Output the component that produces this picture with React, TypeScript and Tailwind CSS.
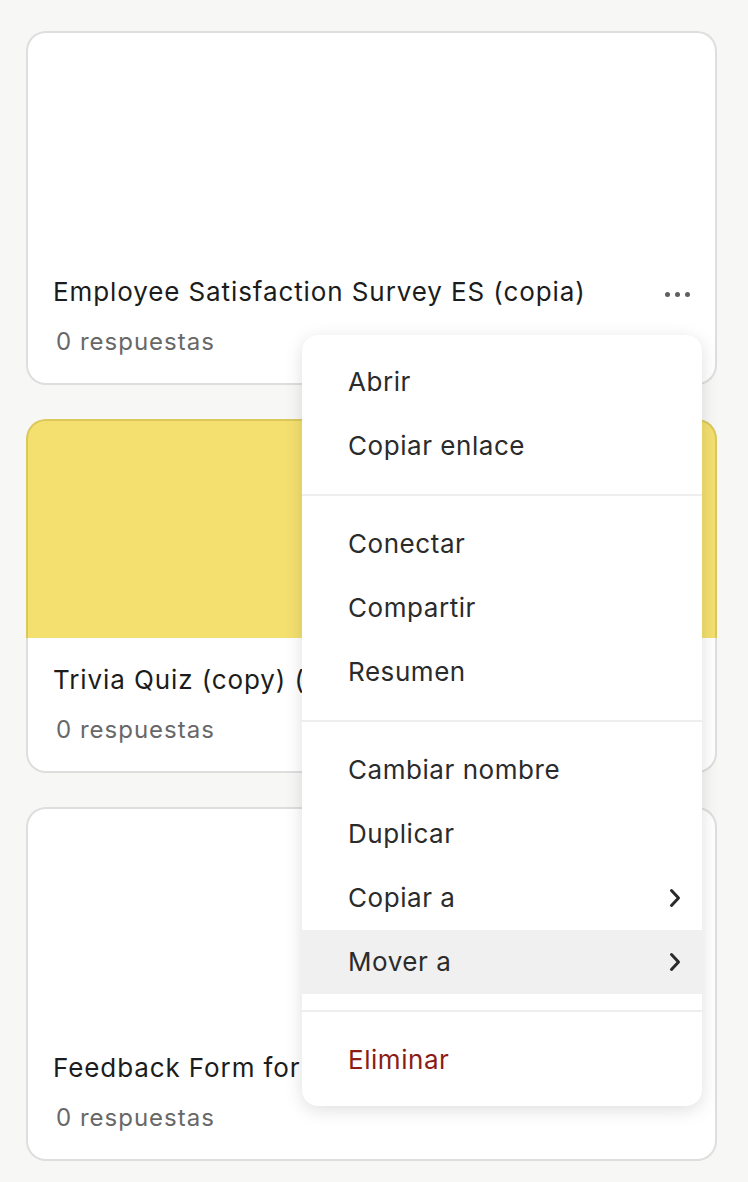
import React from 'react';

type Form = { title: string; responses: number; cover?: string; coverBorder?: string };

const forms: Form[] = [
  { title: 'Employee Satisfaction Survey ES (copia)', responses: 0 },
  { title: 'Trivia Quiz (copy) (copia)', responses: 0, cover: 'bg-[#f4e06f]', coverBorder: 'border-[#dbc85d]' },
  { title: 'Feedback Form for Events', responses: 0 },
];

type MenuItem = { label: string; submenu?: boolean; active?: boolean; danger?: boolean };

const menuGroups: MenuItem[][] = [
  [{ label: 'Abrir' }, { label: 'Copiar enlace' }],
  [{ label: 'Conectar' }, { label: 'Compartir' }, { label: 'Resumen' }],
  [
    { label: 'Cambiar nombre' },
    { label: 'Duplicar' },
    { label: 'Copiar a', submenu: true },
    { label: 'Mover a', submenu: true, active: true },
  ],
  [{ label: 'Eliminar', danger: true }],
];

const Chevron = () => (
  <svg width="14" height="22" viewBox="0 0 14 22" fill="none">
    <path d="M3.5 3.5 L10.5 11 L3.5 18.5" stroke="#2a2a2a" strokeWidth="3" strokeLinecap="round" strokeLinejoin="round" />
  </svg>
);

const Dots = () => (
  <div className="flex items-center gap-[5px] pt-[4px]">
    <span className="w-[5px] h-[5px] rounded-full bg-[#5f5f5f]" />
    <span className="w-[5px] h-[5px] rounded-full bg-[#5f5f5f]" />
    <span className="w-[5px] h-[5px] rounded-full bg-[#5f5f5f]" />
  </div>
);

const FormCard: React.FC<{ form: Form; showDots?: boolean }> = ({ form, showDots }) => (
  <div className="flex flex-col">
    <div
      className={`h-[219px] rounded-t-[20px] border-2 border-b-0 ${form.cover ?? 'bg-white'} ${
        form.coverBorder ?? 'border-[#dedede]'
      }`}
    />
    <div className="bg-white border-2 border-t-0 border-[#dedede] rounded-b-[20px] px-[25px] pt-[27px] pb-[26px]">
      <div className="flex items-center justify-between">
        <p className="text-[26px] leading-[30px] tracking-[0.9px] text-[#1c1c1c] whitespace-nowrap">{form.title}</p>
        {showDots && <Dots />}
      </div>
      <p className="mt-[20px] text-[24px] leading-[30px] tracking-[1px] text-[#686868] pl-[3px]">
        {form.responses} respuestas
      </p>
    </div>
  </div>
);

const ContextMenu = () => (
  <div className="absolute left-[302px] top-[335px] w-[400px] bg-white rounded-[16px] shadow-[0_4px_18px_rgba(0,0,0,0.13)] overflow-hidden">
    {menuGroups.map((group, gi) => (
      <div key={gi}>
        {gi > 0 && <div className="h-[2px] bg-[#eeeeee]" />}
        <div className={gi === 0 ? 'pt-[15px] pb-[16px]' : gi === menuGroups.length - 1 ? 'pt-[16px] pb-[14px]' : 'py-[16px]'}>
          {group.map(item => (
            <div
              key={item.label}
              className={`h-[64px] flex items-center justify-between pl-[46px] pr-[20px] ${
                item.active ? 'bg-[#f0f0f0]' : ''
              }`}
            >
              <span
                className={`text-[26px] tracking-[0.55px] leading-[30px] ${
                  item.danger ? 'text-[#8b1d16]' : 'text-[#2b2b2b]'
                }`}
              >
                {item.label}
              </span>
              {item.submenu && <Chevron />}
            </div>
          ))}
        </div>
      </div>
    ))}
  </div>
);

export default function App() {
  return (
    <div
      className="relative min-h-[1182px] bg-[#f7f7f5] overflow-hidden"
      style={{ fontFamily: 'Inter, "Noto Sans", sans-serif' }}
    >
      <div className="flex flex-col gap-[34px] pt-[31px] pl-[26px] pr-[31px]">
        {forms.map((f, i) => (
          <FormCard key={f.title} form={f} showDots={i === 0} />
        ))}
      </div>
      <ContextMenu />
    </div>
  );
}
